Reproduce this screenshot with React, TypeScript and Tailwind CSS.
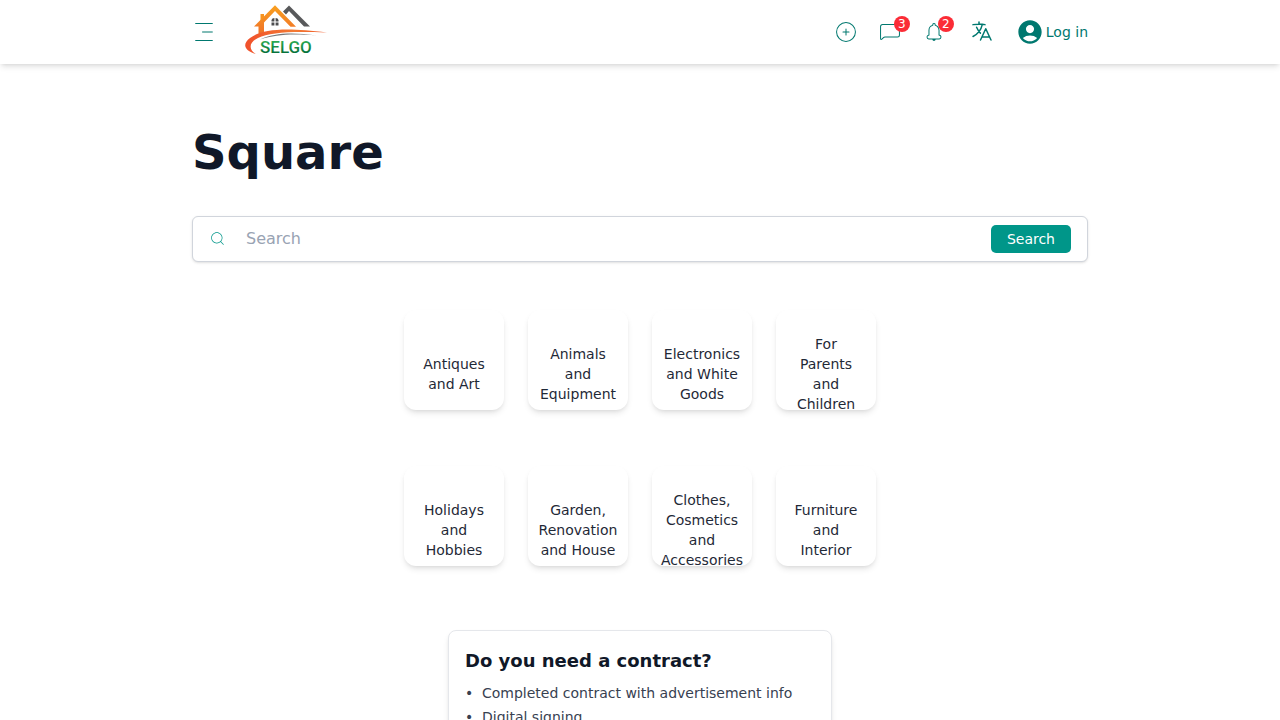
import { CiBellOn, CiChat1, CiCirclePlus, CiMenuFries, CiSearch } from "react-icons/ci";
import { HiOutlineLanguage } from "react-icons/hi2";
import { MdAccountCircle } from "react-icons/md";

const categories = [
  "Antiques and Art",
  "Animals and Equipment",
  "Electronics and White Goods",
  "For Parents and Children",
  "Holidays and Hobbies",
  "Garden, Renovation and House",
  "Clothes, Cosmetics and Accessories",
  "Furniture and Interior",
];

const contractPoints = ["Completed contract with advertisement info", "Digital signing"];

function Logo() {
  return (
    <svg viewBox="0 0 90 60" className="h-15 w-[90px]" role="img" aria-label="Selgo">
      <defs>
        <linearGradient id="roof" x1="0" y1="0" x2="0" y2="1">
          <stop offset="0" stopColor="#f9a11f" />
          <stop offset="1" stopColor="#ef6f2a" />
        </linearGradient>
        <linearGradient id="swoosh" x1="0" y1="0" x2="1" y2="0">
          <stop offset="0" stopColor="#f0502c" />
          <stop offset="0.6" stopColor="#f37a33" />
          <stop offset="1" stopColor="#ef5a2c" />
        </linearGradient>
        <linearGradient id="word" x1="0" y1="0" x2="0" y2="1">
          <stop offset="0.2" stopColor="#2bab55" />
          <stop offset="0.8" stopColor="#04703a" />
        </linearGradient>
      </defs>
      <path d="M43 11.5 49 5.5 70 26.5H64L49 11 46 14.5Z" fill="#58595b" />
      <path d="M14 26.5 35 5.2 56 26.8H50.5L35 11 24 22.5V33L18.5 35V26.5Z" fill="url(#roof)" />
      <path d="M20.5 14H24V17.5L20.5 21Z" fill="#f7931e" />
      <path d="M31.5 21.5V20Q32 18 34.4 18V21.5ZM35.6 18Q38 18 38.5 20V21.5H35.6ZM31.5 22.6H34.4V25.5H31.5ZM35.6 22.6H38.5V25.5H35.6Z" fill="#4d4d4f" />
      <path d="M16 54C4 51 2 44 10 38C22 29 45 27 87 32.5C52 31 30 32 18 38C8 43 9 50 16 54Z" fill="url(#swoosh)" />
      <path d="M20 39.5C34 33 52 32 77 35.5C54 33.5 36 34 20 39.5Z" fill="#77787b" />
      <text
        x="20"
        y="53"
        className="font-['Roboto',sans-serif] text-[17px] font-medium"
        fill="url(#word)"
      >
        SELGO
      </text>
    </svg>
  );
}

function Badge({ count }: { count: number }) {
  return (
    <span className="absolute -top-1 -right-2 flex size-4 items-center justify-center rounded-full bg-[#fb2c36] text-xs text-white">
      {count}
    </span>
  );
}

function Header() {
  return (
    <header className="bg-white shadow-md">
      <div className="mx-auto flex h-16 max-w-4xl items-center justify-between text-[#00786f]">
        <div className="flex items-center gap-6">
          <button type="button" aria-label="Menu">
            <CiMenuFries className="size-6" />
          </button>
          <a href="#" className="pb-1">
            <Logo />
          </a>
        </div>
        <nav className="flex items-center gap-[22px]">
          <div className="flex items-center gap-6">
            <div className="flex items-center gap-5">
              <button type="button" aria-label="Add advertisement">
                <CiCirclePlus className="size-6" />
              </button>
              <button type="button" aria-label="Messages" className="relative">
                <CiChat1 className="size-6" />
                <Badge count={3} />
              </button>
              <button type="button" aria-label="Notifications" className="relative">
                <CiBellOn className="size-6" />
                <Badge count={2} />
              </button>
            </div>
            <button type="button" aria-label="Language" className="pb-0.5">
              <HiOutlineLanguage className="size-6" />
            </button>
          </div>
          <a href="#" className="flex items-center gap-0.5 text-sm">
            <MdAccountCircle className="size-7" />
            Log in
          </a>
        </nav>
      </div>
    </header>
  );
}

export default function App() {
  return (
    <div className="min-h-screen bg-white font-['DejaVu_Sans',sans-serif] text-[#1f2937]">
      <Header />
      <main className="mx-auto max-w-4xl pt-16">
        <h1 className="text-5xl font-bold text-gray-900">Square</h1>
        <form
          role="search"
          className="mt-10 flex h-[46px] items-center rounded-md border border-gray-300 bg-white px-4 shadow-sm"
        >
          <label htmlFor="query" className="pb-px text-[#009689]">
            <CiSearch className="size-[17px]" aria-label="Search" />
          </label>
          <input
            id="query"
            type="text"
            placeholder="Search"
            className="min-w-0 flex-1 px-5 text-base outline-none placeholder:text-[#99a3b3]"
          />
          <button type="submit" className="rounded-[5px] bg-[#009689] px-4 py-1 text-sm text-white">
            Search
          </button>
        </form>
        <ul className="mx-auto mt-12 grid w-fit grid-cols-4 gap-x-6 gap-y-14">
          {categories.map((name) => (
            <li key={name}>
              <a
                href="#"
                className="flex size-[100px] flex-col items-center justify-center overflow-hidden rounded-xl bg-white px-3 pt-7 text-center text-sm shadow-md"
              >
                <span>{name}</span>
              </a>
            </li>
          ))}
        </ul>
        <section className="mx-auto mt-16 w-96 rounded-lg border border-gray-200 bg-white p-4 shadow-md">
          <h2 className="text-lg font-bold text-gray-900">Do you need a contract?</h2>
          <ul className="mt-1.5 text-sm leading-6 text-[#374151]">
            {contractPoints.map((point) => (
              <li key={point} className="flex">
                <span aria-hidden="true" className="w-[17px]">•</span>
                {point}
              </li>
            ))}
          </ul>
        </section>
      </main>
    </div>
  );
}
